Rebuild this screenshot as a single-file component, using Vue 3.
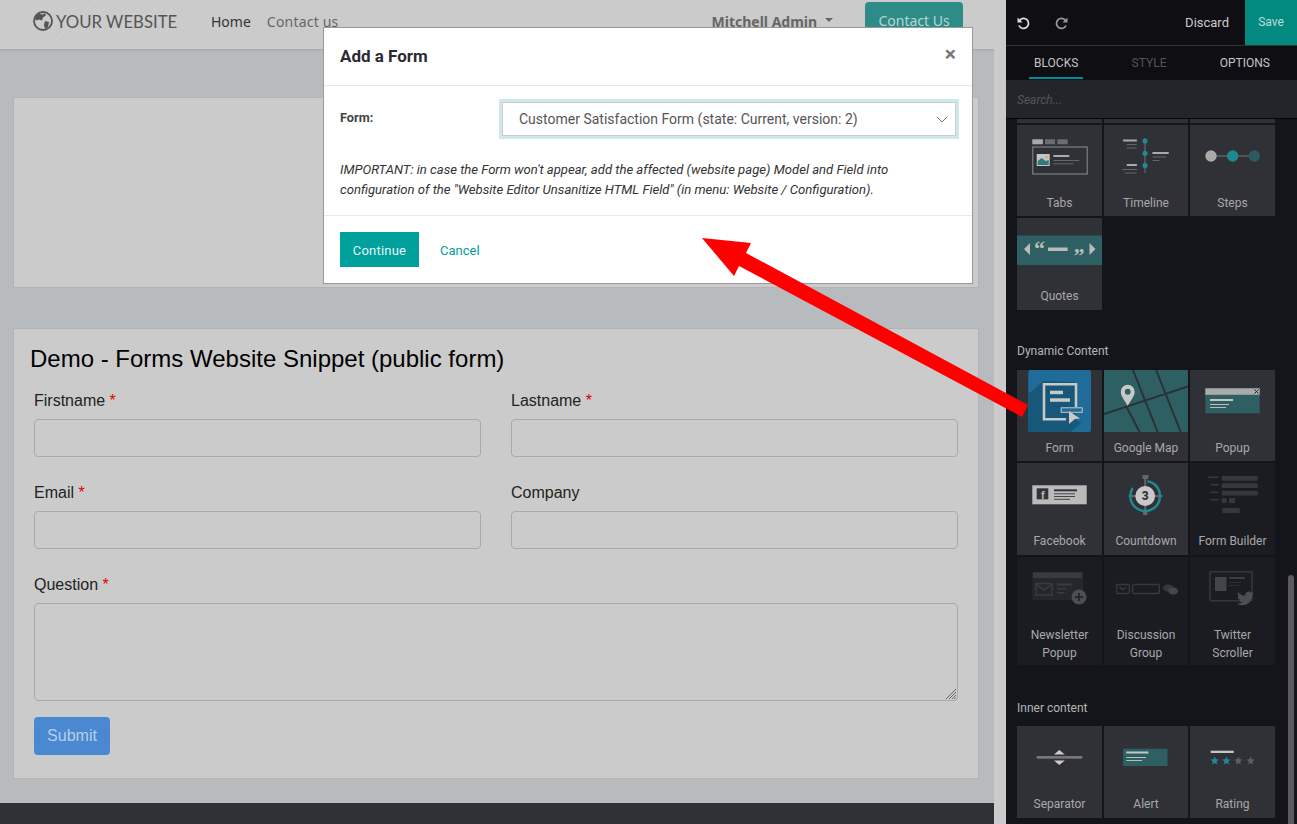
<script setup>
const icons = {
  tabs: `<rect x="15.3" y="14.3" width="10.6" height="5" fill="#aaa"/><rect x="28" y="14.3" width="10" height="5" fill="#6c6c70"/><rect x="40.3" y="14.3" width="10.4" height="5" fill="#6c6c70"/><rect x="15.8" y="22" width="54.4" height="27" fill="none" stroke="#8d8d90"/><rect x="19.7" y="29" width="13" height="12" fill="#c5c5c5"/><path d="M20.7 40v-4l4-3 4 3 3-1v5z" fill="#2e7a78"/><circle cx="29.5" cy="32" r="1.6" fill="#c9b85a"/><rect x="36.3" y="30" width="16" height="2" fill="#aaa"/><rect x="36.3" y="35" width="26" height="1" fill="#66666a"/><rect x="36.3" y="38.3" width="20" height="1" fill="#66666a"/>`,
  timeline: `<rect x="41" y="13" width="1" height="35" fill="#707074"/><circle cx="41.5" cy="16" r="2.6" fill="#1f8a92"/><circle cx="41.5" cy="28.3" r="2.6" fill="#1f8a92"/><circle cx="41.5" cy="40.6" r="2.6" fill="#1f8a92"/><rect x="19.3" y="14.5" width="14" height="2" fill="#aaa"/><rect x="23" y="19" width="10" height="1" fill="#66666a"/><rect x="23" y="22.5" width="10" height="1" fill="#66666a"/><rect x="49" y="27" width="16.5" height="2" fill="#aaa"/><rect x="49" y="31.5" width="14" height="1" fill="#66666a"/><rect x="49" y="35" width="7" height="1" fill="#66666a"/><rect x="23" y="39" width="10.3" height="2" fill="#aaa"/><rect x="18.5" y="44" width="14.8" height="1" fill="#66666a"/><rect x="21" y="47.5" width="12" height="1" fill="#66666a"/>`,
  steps: `<path d="M21 31h43" stroke="#77777a"/><circle cx="21" cy="31" r="5.7" fill="#aaa"/><circle cx="42.7" cy="31" r="5.7" fill="#1d8a90"/><circle cx="64.3" cy="31" r="5.7" fill="#2d5a60"/>`,
  quotes: `<rect y="17.5" width="85" height="29.5" fill="#2e5f62"/><path d="M13 25v12l-6-6zM72.5 25v12l6-6z" fill="#bbb"/><rect x="31" y="29.5" width="19.6" height="3.5" fill="#bbb"/><text x="17" y="38" font-size="22" font-family="Liberation Serif" font-weight="700" fill="#bbb">“</text><text x="56.5" y="45" font-size="22" font-family="Liberation Serif" font-weight="700" fill="#bbb">”</text>`,
  form: `<rect x="11.3" y="0" width="62.7" height="62" rx="2" fill="#1f6c98"/><path d="M13.3 62a2 2 0 0 1-2-2V24l15-13 33 1v38l5 3-11 9z" fill="#17577a"/><path d="M59 37V14.3H27v35h22" fill="none" stroke="#c9c9c9" stroke-width="2.5"/><rect x="33" y="20.7" width="13" height="3.5" fill="#c9c9c9"/><rect x="33" y="28.3" width="20" height="3.5" fill="#c9c9c9"/><rect x="44.2" y="37.8" width="21" height="4.5" fill="#1f6c98" stroke="#c9c9c9"/><path d="M52 41l11 7.5-5 .5-6 5z" fill="#c9c9c9"/>`,
  map: `<rect width="85" height="62" fill="#2e5f62"/><path d="M29.3 0l25 62M52.7 0l25 62M0 44l85-27.5M22.7 36.7L36 62" stroke="#2b3236" stroke-width="2" fill="none"/><path d="M24 35.7c-3-5-7-9.5-7-14a7 7 0 0 1 14 0c0 4.5-4 9-7 14z" fill="#c8c8c8"/><circle cx="24" cy="21.7" r="3" fill="#2e5f62"/>`,
  popup: `<rect x="15.3" y="18.3" width="54.4" height="25" fill="#2e5f62"/><rect x="15.3" y="18.3" width="54.4" height="6.5" fill="#aaa"/><path d="M64.5 19.5l4 4m0-4l-4 4" stroke="#222" fill="none"/><rect x="20" y="29" width="23" height="2" fill="#c5c5c5"/><rect x="20" y="34" width="19" height="1" fill="#bbb"/><rect x="20" y="37" width="16" height="1" fill="#bbb"/>`,
  facebook: `<rect x="15.3" y="22.3" width="54.4" height="19" fill="#bbb"/><rect x="19.7" y="25.3" width="11.6" height="11" fill="#33343a"/><text x="24" y="36" font-size="11" font-family="Liberation Sans" font-weight="700" fill="#bbb">f</text><rect x="37" y="26.3" width="23" height="2" fill="#33343a"/><rect x="37" y="30.3" width="21" height="1" fill="#44454a"/><rect x="37" y="33" width="21" height="1" fill="#44454a"/><rect x="37" y="35.8" width="16" height="1" fill="#44454a"/>`,
  countdown: `<path d="M41.7 14v38M25 33h34" stroke="#66666a" stroke-width="2"/><rect x="39" y="12" width="6" height="4" fill="#66666a"/><rect x="39.5" y="49" width="4.5" height="3" fill="#66666a"/><path d="M44 18.2A15 15 0 1 1 29 25" fill="none" stroke="#1d8a90" stroke-width="2.5"/><circle cx="41.7" cy="33" r="10" fill="#c8c8c8"/><text x="41.7" y="37.5" text-anchor="middle" font-size="12" font-family="Roboto" font-weight="900" fill="#33343a">3</text>`,
  builder: `<g fill="#37383d"><rect x="18.5" y="13.5" width="10" height="1.5"/><rect x="21" y="21" width="7.5" height="1.5"/><rect x="20" y="28.5" width="8.5" height="1.5"/><rect x="20" y="36" width="8.5" height="1.5"/><rect x="31.7" y="13" width="36" height="4.7" rx="1"/><rect x="31.7" y="20.3" width="36" height="4.7" rx="1"/><rect x="31.7" y="27.7" width="36" height="4.7" rx="1"/><rect x="31.7" y="35" width="5" height="5" rx="1"/><rect x="39" y="35" width="6" height="5" rx="1"/><rect x="32.3" y="45" width="17.5" height="5" rx="1"/></g>`,
  newsletter: `<rect x="15.3" y="14.7" width="51" height="28.3" rx="1" fill="#26272c"/><rect x="16" y="15.5" width="49" height="5.5" fill="#3a3b40"/><path d="M19 26.5h16v11.5H19zM19 27l8 6 8-6" fill="none" stroke="#3a3b40" stroke-width="1.5"/><rect x="40" y="26.5" width="15" height="2" fill="#3a3b40"/><rect x="40" y="31" width="9" height="1.5" fill="#3a3b40"/><rect x="40" y="35" width="7" height="1.5" fill="#3a3b40"/><circle cx="62" cy="40" r="7.5" fill="#4d4e53"/><path d="M62 36v8M58 40h8" stroke="#26272c" stroke-width="2"/>`,
  discussion: `<g fill="none" stroke="#37383d" stroke-width="1.5"><rect x="12.7" y="27.5" width="13" height="9" rx="1.5"/><path d="M15.5 30l4 2.5 3.5-2.5"/><rect x="29" y="27.5" width="27" height="9" rx="1.5"/></g><ellipse cx="65" cy="31" rx="5.5" ry="3.5" fill="#37383d"/><ellipse cx="70" cy="34" rx="5" ry="3.5" fill="#45464b"/>`,
  twitter: `<rect x="20" y="14.7" width="42" height="29" rx="1" fill="none" stroke="#37383d" stroke-width="1.5"/><rect x="25" y="20" width="11.5" height="14" fill="#44454a"/><rect x="39" y="20" width="16" height="2" fill="#3c3d42"/><rect x="39" y="25" width="12" height="1" fill="#2e2f34"/><rect x="39" y="28" width="10" height="1" fill="#2e2f34"/><path transform="translate(47 33) scale(.7)" d="M23.953 4.57a10 10 0 01-2.825.775 4.958 4.958 0 002.163-2.723c-.951.555-2.005.959-3.127 1.184a4.92 4.92 0 00-8.384 4.482C7.69 8.095 4.067 6.13 1.64 3.162a4.822 4.822 0 00-.666 2.475c0 1.71.87 3.213 2.188 4.096a4.904 4.904 0 01-2.228-.616v.06a4.923 4.923 0 003.946 4.827 4.996 4.996 0 01-2.212.085 4.936 4.936 0 004.604 3.417 9.867 9.867 0 01-6.102 2.105c-.39 0-.779-.023-1.17-.067a13.995 13.995 0 007.557 2.209c9.053 0 13.998-7.496 13.998-13.985 0-.21 0-.42-.015-.63A9.935 9.935 0 0024 4.59z" fill="#4d4e53"/>`,
  separator: `<rect x="19.7" y="30" width="45.6" height="2.7" fill="#77777a"/><path d="M42.3 24l5.5 4.5H37zM42.3 39l5.5-4.5H37z" fill="#ccc"/>`,
  alert: `<rect x="19.3" y="22.7" width="45" height="17.3" rx="1" fill="#2e5f62"/><rect x="22.5" y="25.5" width="22.5" height="2" fill="#c5c5c5"/><rect x="22.5" y="31" width="20" height="1" fill="#bbb"/><rect x="22.5" y="34" width="16" height="1" fill="#bbb"/>`,
  rating: `<rect x="20.7" y="24.7" width="23" height="2.3" fill="#c5c5c5"/>` +
    [[24.7, '#1d8a9a'], [36.3, '#1d8a9a'], [48.3, '#5d5d62'], [60.7, '#5d5d62']]
      .map(([x, c]) => `<path transform="translate(${x} 34.7)" d="M0-4.2l1.2 2.8 3 .3-2.3 2 .7 3L0 2.4l-2.6 1.5.7-3-2.3-2 3-.3z" fill="${c}"/>`)
      .join('')
}

const sections = [
  {
    title: '',
    blocks: [
      { label: '', key: '', stub: true },
      { label: '', key: '', stub: true },
      { label: '', key: '', stub: true },
      { label: 'Tabs', key: 'tabs' },
      { label: 'Timeline', key: 'timeline' },
      { label: 'Steps', key: 'steps' },
      { label: 'Quotes', key: 'quotes' }
    ]
  },
  {
    title: 'Dynamic Content',
    blocks: [
      { label: 'Form', key: 'form' },
      { label: 'Google Map', key: 'map' },
      { label: 'Popup', key: 'popup' },
      { label: 'Facebook', key: 'facebook' },
      { label: 'Countdown', key: 'countdown' },
      { label: 'Form Builder', key: 'builder', dim: true },
      { label: 'Newsletter Popup', key: 'newsletter', dim: true },
      { label: 'Discussion Group', key: 'discussion', dim: true },
      { label: 'Twitter Scroller', key: 'twitter', dim: true }
    ]
  },
  {
    title: 'Inner content',
    blocks: [
      { label: 'Separator', key: 'separator' },
      { label: 'Alert', key: 'alert' },
      { label: 'Rating', key: 'rating' }
    ]
  }
]
</script>

<template>
  <div class="app">
    <div class="site">
      <header class="nav">
        <div class="logo">
          <svg class="globe" viewBox="0 0 20 20" width="20" height="20">
            <circle cx="10" cy="10" r="9" fill="none" stroke="#555" stroke-width="1.8" />
            <path d="M6 2.5l3 1 3-1 1 2-3 2-1 3-3-1-3 1-1-2 2-4zM12 10l4 1-1 5-3 2-1-4z" fill="#555" />
          </svg>
          <span>YOUR WEBSITE</span>
        </div>
        <a class="nav-link active">Home</a>
        <a class="nav-link">Contact us</a>
        <span class="user">Mitchell Admin<i class="caret"></i></span>
        <a class="cta">Contact Us</a>
      </header>

      <section class="box box-empty"></section>

      <section class="box box-form">
        <h2>Demo - Forms Website Snippet (public form)</h2>
        <div class="fields">
          <div class="field">
            <label>Firstname <b>*</b></label>
            <div class="input"></div>
          </div>
          <div class="field">
            <label>Lastname <b>*</b></label>
            <div class="input"></div>
          </div>
          <div class="field">
            <label>Email <b>*</b></label>
            <div class="input"></div>
          </div>
          <div class="field">
            <label>Company</label>
            <div class="input"></div>
          </div>
          <div class="field wide">
            <label>Question <b>*</b></label>
            <div class="input area">
              <svg class="grip" viewBox="0 0 11 11" width="11" height="11">
                <path d="M1 11L11 1M4 11l7-7M7 11l4-4M9.5 11l1.5-1.5" stroke="#666" fill="none" />
              </svg>
            </div>
          </div>
        </div>
        <button class="submit">Submit</button>
      </section>

      <footer class="foot"></footer>
    </div>

    <div class="page-scroll"></div>

    <aside class="side">
      <div class="topbar">
        <svg class="hist" viewBox="0 0 14 14" width="14" height="14">
          <path d="M3.5 4.5a5 5 0 1 1-.5 5" fill="none" stroke="#ddd" stroke-width="1.8" />
          <path d="M1.5 1.5v5h5z" fill="#ddd" />
        </svg>
        <svg class="hist redo" viewBox="0 0 14 14" width="14" height="14">
          <path d="M10.5 4.5a5 5 0 1 0 .5 5" fill="none" stroke="#999" stroke-width="1.8" />
          <path d="M12.5 1.5v5h-5z" fill="#999" />
        </svg>
        <span class="discard">Discard</span>
        <span class="save">Save</span>
      </div>
      <nav class="tabs">
        <span class="tab on">BLOCKS</span>
        <span class="tab off">STYLE</span>
        <span class="tab">OPTIONS</span>
      </nav>
      <div class="search">Search...</div>
      <div class="list">
        <section v-for="(s, i) in sections" :key="i" class="group">
          <h4 v-if="s.title">{{ s.title }}</h4>
          <div class="grid">
            <div
              v-for="(b, j) in s.blocks"
              :key="j"
              class="cell"
              :class="{ dim: b.dim, stub: b.stub }"
            >
              <template v-if="!b.stub">
                <svg class="ico" viewBox="0 0 85 62" preserveAspectRatio="none" v-html="icons[b.key]"></svg>
                <span class="lbl">{{ b.label }}</span>
              </template>
            </div>
          </div>
        </section>
      </div>
      <div class="thumb"></div>
    </aside>

    <div class="modal">
      <div class="m-head">
        <strong>Add a Form</strong>
        <span class="close">×</span>
      </div>
      <div class="m-body">
        <div class="m-row">
          <label>Form:</label>
          <div class="select">
            <span>Customer Satisfaction Form (state: Current, version: 2)</span>
            <svg viewBox="0 0 12 7" width="12" height="7">
              <path d="M1 1l5 5 5-5" fill="none" stroke="#777" />
            </svg>
          </div>
        </div>
        <p>IMPORTANT: in case the Form won't appear, add the affected (website page) Model and Field into<br />configuration of the "Website Editor Unsanitize HTML Field" (in menu: Website / Configuration).</p>
      </div>
      <div class="m-foot">
        <button class="primary">Continue</button>
        <a class="cancel">Cancel</a>
      </div>
    </div>

    <svg class="arrow" viewBox="0 0 1297 824" width="1297" height="824">
      <polygon points="702,238 751,243 746,253 1028,405 1022,417 739,266 734,276" fill="#ff0000" />
    </svg>
  </div>
</template>

<style>
html, body { margin: 0; overflow: hidden; background: #14151a; }
</style>

<style scoped>
.app {
  position: relative;
  display: flex;
  width: 1297px;
  height: 824px;
  overflow: hidden;
  font-family: Roboto, sans-serif;
}
.site {
  width: 994px;
  flex: none;
  display: flex;
  flex-direction: column;
  background: #b7bbbe;
}
.page-scroll { width: 12px; flex: none; background: #cbcbcb; }

.nav {
  height: 49px;
  flex: none;
  display: flex;
  align-items: center;
  background: #cbcbcb;
  box-shadow: 0 1px 3px rgba(0, 0, 0, .12);
  font-family: "Noto Sans", sans-serif;
  font-size: 14px;
  padding-left: 28px;
  box-sizing: border-box;
}
.logo {
  width: 152px;
  height: 41px;
  display: flex;
  align-items: center;
  gap: 3px;
  padding-left: 5px;
  box-sizing: border-box;
  margin-top: -7px;
  font-family: Lato, sans-serif;
  font-size: 16.75px;
  color: #555;
  white-space: nowrap;
  background: repeating-linear-gradient(135deg, transparent 0 11px, rgba(255, 255, 255, .12) 11px 12px);
}
.globe { flex: none; }
.nav-link { color: #666; margin-top: -6px; margin-left: 16px; letter-spacing: .2px; }
.nav-link.active { color: #333; margin-left: 31px; letter-spacing: 0; }
.user {
  margin-left: 373px;
  margin-top: -6px;
  font-weight: 700;
  color: #666;
  white-space: nowrap;
  display: flex;
  align-items: center;
}
.caret {
  width: 0;
  height: 0;
  margin: -3px 0 0 8px;
  border: 4px solid transparent;
  border-top-color: #666;
  border-bottom: 0;
}
.cta {
  margin-left: 32px;
  margin-top: -7px;
  width: 98px;
  height: 38px;
  line-height: 38px;
  text-align: center;
  background: #2d8c87;
  color: #b9d6d4;
  border-radius: 4px;
  white-space: nowrap;
}

.box {
  margin: 0 15px 0 13px;
  background: #cbcbcb;
  border: 1px solid #b2b4b5;
  box-sizing: border-box;
  flex: none;
}
.box-empty { height: 191px; margin-top: 48px; }
.box-form {
  height: 451px;
  margin-top: 40px;
  padding: 16px 20px 0 16px;
  font-family: "Liberation Sans", Arial, sans-serif;
  color: #222;
}
.box-form h2 {
  margin: 0 0 16px;
  font-size: 24px;
  line-height: 28px;
  font-weight: 400;
  color: #000;
}
.fields {
  display: grid;
  grid-template-columns: 447px 447px;
  column-gap: 30px;
  row-gap: 24px;
  margin-left: 4px;
}
.field.wide { grid-column: 1 / 3; }
.field label {
  display: block;
  font-size: 16px;
  line-height: 24px;
  margin-bottom: 6px;
}
.field b { font-weight: 400; color: #d00; }
.input {
  position: relative;
  height: 38px;
  box-sizing: border-box;
  border: 1px solid #a8a9aa;
  border-radius: 4px;
  background: #cbcbcb;
}
.input.area { height: 98px; }
.grip { position: absolute; right: 1px; bottom: 1px; }
.submit {
  display: block;
  margin: 16px 0 0 4px;
  width: 76px;
  height: 38px;
  padding: 0;
  border: 0;
  border-radius: 4px;
  background: #4a89d2;
  color: #b9cfe8;
  font: 16px "Liberation Sans", Arial, sans-serif;
}
.foot { flex: 1; margin-top: 24px; background: #2e3236; }

.side {
  position: relative;
  width: 291px;
  flex: none;
  background: #14151a;
  display: flex;
  flex-direction: column;
  font-size: 12px;
}
.topbar {
  height: 45px;
  flex: none;
  display: flex;
  align-items: center;
  background: #0f0e13;
  border-bottom: 1px solid #333;
  box-sizing: content-box;
  color: #ccc;
}
.hist { margin-left: 10px; }
.hist.redo { margin-left: 25px; }
.discard { margin-left: auto; margin-right: 16px; font-size: 13px; }
.save {
  width: 52px;
  height: 45px;
  line-height: 45px;
  text-align: center;
  background: #038a80;
  color: #bcdcd9;
}
.tabs {
  height: 34px;
  flex: none;
  display: flex;
  justify-content: space-between;
  padding: 0 22px 0 23px;
  background: #0f0e13;
  color: #c5c5c5;
}
.tab {
  padding: 0 5px;
  line-height: 35px;
  height: 33px;
  box-sizing: border-box;
}
.tab.on { border-bottom: 2px solid #038a99; }
.tab.off { color: #555; }
.search {
  height: 38px;
  flex: none;
  line-height: 40px;
  padding-left: 11px;
  background: #23252b;
  border-bottom: 1px solid #050507;
  box-sizing: content-box;
  color: #555;
  font-style: italic;
  font-size: 12px;
}
.list { padding-left: 11px; flex: 1; overflow: hidden; }
.group h4 {
  margin: 32px 0 10px;
  height: 18px;
  font-size: 12px;
  line-height: 18px;
  font-weight: 400;
  color: #b5b5b8;
}
.group:last-child h4 { margin-top: 34px; margin-bottom: 9px; }
.grid {
  width: 258px;
  display: grid;
  grid-template-columns: 85px 84px 85px;
  gap: 2px;
}
.group:nth-child(1) .grid { grid-template-rows: 4px 91px 92px; }
.group:nth-child(2) .grid { grid-template-rows: 91px 92px 108px; }
.group:nth-child(3) .grid { grid-template-rows: 92px; }
.cell {
  background: #303136;
  display: flex;
  flex-direction: column;
  align-items: center;
  box-sizing: border-box;
}
.cell.dim { background: #1b1c22; }
.ico { width: 100%; height: 62px; flex: none; display: block; }
.lbl {
  margin-top: 7px;
  line-height: 18px;
  color: #a8a8ab;
  text-align: center;
  width: 70px;
}
.cell:not(.dim) .lbl { white-space: nowrap; }
.thumb {
  position: absolute;
  right: 3px;
  top: 575px;
  bottom: 0;
  width: 6px;
  border-radius: 3px 3px 0 0;
  background: #5b5a60;
}

.modal {
  position: absolute;
  left: 323px;
  top: 27px;
  width: 650px;
  height: 257px;
  box-sizing: border-box;
  background: #fff;
  border: 1px solid #999;
  display: flex;
  flex-direction: column;
  color: #333;
}
.m-head {
  height: 58px;
  flex: none;
  box-sizing: border-box;
  border-bottom: 1px solid #e9e9e9;
  display: flex;
  align-items: center;
  justify-content: space-between;
  padding: 0 16px 2px;
}
.m-head strong { font-size: 17px; font-weight: 700; color: #2b2b33; }
.close {
  font: 700 21px/1 Roboto, sans-serif;
  color: #777;
  margin-top: -3px;
}
.m-body {
  height: 130px;
  flex: none;
  box-sizing: border-box;
  border-bottom: 1px solid #e9e9e9;
  padding: 16px 16px 0;
}
.m-row { display: flex; align-items: center; }
.m-row label { width: 162px; flex: none; font-size: 12.7px; line-height: 16px; margin-top: -2px; font-weight: 700; color: #444; }
.select {
  width: 454px;
  height: 34px;
  box-sizing: border-box;
  border: 1px solid #ccc;
  box-shadow: 0 0 0 3px #cfe9e9;
  display: flex;
  align-items: center;
  justify-content: space-between;
  padding: 0 7px 0 16px;
  font-size: 14px;
  color: #555;
}
.m-body p {
  margin: 24px 0 0;
  font-size: 13.1px;
  line-height: 20px;
  font-style: italic;
  color: #333;
}
.m-foot { flex: 1; display: flex; align-items: center; padding: 0 16px; }
.primary {
  width: 79px;
  height: 35px;
  padding: 1px 0 0;
  border: 0;
  background: #00a09d;
  color: #e6f5f5;
  font: 13px Roboto, sans-serif;
  letter-spacing: .2px;
}
.cancel { margin: 1px 0 0 21px; font-size: 13px; color: #00a09d; }
.arrow { position: absolute; left: 0; top: 0; pointer-events: none; }
</style>
